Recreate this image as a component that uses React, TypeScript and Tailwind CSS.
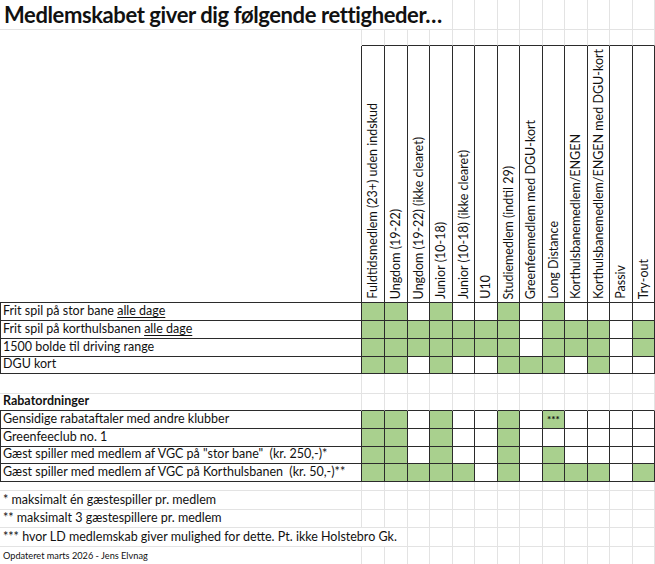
import React from "react";

const GRID =
  "grid grid-cols-[362px_23px_23px_22px_23px_22px_23px_22px_23px_22px_23px_22px_23px_22px]";

const R_DARK = "border-r border-r-[#2b2b2b]";
const R_LIGHT = "border-r border-r-[#e3e3e3]";
const B_DARK = "border-b border-b-[#2b2b2b]";
const B_LIGHT = "border-b border-b-[#e3e3e3]";
const L_DARK = "border-l border-l-[#2b2b2b]";

const memberTypes = [
  "Fuldtidsmedlem (23+) uden indskud",
  "Ungdom (19-22)",
  "Ungdom (19-22) (ikke clearet)",
  "Junior (10-18)",
  "Junior (10-18) (ikke clearet)",
  "U10",
  "Studiemedlem (indtil 29)",
  "Greenfeemedlem med DGU-kort",
  "Long Distance",
  "Korthulsbanemedlem/ENGEN",
  "Korthulsbanemedlem/ENGEN med DGU-kort",
  "Passiv",
  "Try-out",
];

// G = grøn, W = hvid, S = grøn med ***
const rights = [
  { label: <>Frit spil på stor bane <span className="underline underline-offset-2">alle dage</span></>, marks: "GGWGWWGWGWWWW", h: "h-[18px]" },
  { label: <>Frit spil på korthulsbanen <span className="underline underline-offset-2">alle dage</span></>, marks: "GGGGGGGWGGGWG", h: "h-[18px]" },
  { label: "1500 bolde til driving range", marks: "GGGGGGGWGGGWG", h: "h-[18px]" },
  { label: "DGU kort", marks: "GGWGWWGGGWGWW", h: "h-[17px]" },
];

const discounts = [
  { label: "Gensidige rabataftaler med andre klubber", marks: "GGWGWWGWSWWWW", h: "h-[18px]" },
  { label: "Greenfeeclub no. 1", marks: "GGWGWWGWWWWWW", h: "h-[18px]" },
  { label: 'Gæst spiller med medlem af VGC på "stor bane"  (kr. 250,-)*', marks: "GGWGWWGWGWWWW", h: "h-[17px]" },
  { label: "Gæst spiller med medlem af VGC på Korthulsbanen  (kr. 50,-)**", marks: "GGGGGWGWGGGWG", h: "h-[18px]" },
];

const TableRow = ({ label, marks, h }: { label: React.ReactNode; marks: string; h: string }) => (
  <div className={`${GRID} ${h}`}>
    <div className={`${L_DARK} ${R_DARK} ${B_DARK} flex items-end pl-[2px] pb-[2px] leading-[14px] whitespace-pre overflow-hidden`}>
      {label}
    </div>
    {marks.split("").map((m, i) => (
      <div
        key={i}
        className={`${R_DARK} ${B_DARK} ${m === "W" ? "bg-white" : "bg-[#a9d08e]"} flex justify-center`}
      >
        {m === "S" && <span className="text-[10px] font-bold leading-none pt-[3px]">***</span>}
      </div>
    ))}
  </div>
);

// arkrække med lyse gitterlinjer; hide = antal kolonnelinjer der skjules af overløbende tekst
const SheetRow = ({
  h,
  children,
  hide = 0,
  bottom = "light",
}: {
  h: string;
  children?: React.ReactNode;
  hide?: number;
  bottom?: "light" | "dark";
}) => {
  const b = bottom === "dark" ? B_DARK : B_LIGHT;
  return (
    <div className={`${GRID} ${h}`}>
      <div className={`${hide > 0 ? "" : R_LIGHT} ${b} relative flex items-end pl-[3px] pb-[2px] leading-[14px] whitespace-nowrap`}>
        {children}
      </div>
      {memberTypes.map((_, i) => (
        <div key={i} className={`${i + 1 < hide ? "" : R_LIGHT} ${b}`} />
      ))}
    </div>
  );
};

export default function App() {
  return (
    <div className="w-[655px] h-[564px] overflow-hidden bg-white text-[#111] text-[12.5px] font-['Lato',sans-serif]">
      <SheetRow h="h-[30px]" hide={4}>
        <span className="absolute left-[4px] top-[1px] text-[22px] leading-[28px] font-bold tracking-[-0.4px]">
          Medlemskabet giver dig følgende rettigheder…
        </span>
      </SheetRow>

      <div className={`${GRID} h-[16px]`}>
        <div className={R_LIGHT} />
        {memberTypes.map((_, i) => (
          <div key={i} className={`${R_LIGHT} ${B_DARK}`} />
        ))}
      </div>

      <div className={`${GRID} h-[257px]`}>
        <div className={`${R_DARK} ${B_DARK}`} />
        {memberTypes.map((t) => (
          <div key={t} className={`${R_DARK} ${B_DARK} flex flex-col items-center justify-end pb-[3px]`}>
            <span className="[writing-mode:vertical-rl] rotate-180 whitespace-nowrap leading-[14px]">{t}</span>
          </div>
        ))}
      </div>

      {rights.map((r, i) => (
        <TableRow key={i} {...r} />
      ))}

      <SheetRow h="h-[20px]" />
      <SheetRow h="h-[17px]" bottom="dark">
        <span className="font-bold">Rabatordninger</span>
      </SheetRow>

      {discounts.map((r, i) => (
        <TableRow key={i} {...r} />
      ))}

      <SheetRow h="h-[9px]" />
      <SheetRow h="h-[19px]">* maksimalt én gæstespiller pr. medlem</SheetRow>
      <SheetRow h="h-[18px]">** maksimalt 3 gæstespillere pr. medlem</SheetRow>
      <SheetRow h="h-[19px]" hide={2}>
        *** hvor LD medlemskab giver mulighed for dette. Pt. ikke Holstebro Gk.
      </SheetRow>
      <SheetRow h="h-[18px]">
        <span className="text-[9.2px] leading-[12px]">Opdateret marts 2026 - Jens Elvnag</span>
      </SheetRow>
    </div>
  );
}
